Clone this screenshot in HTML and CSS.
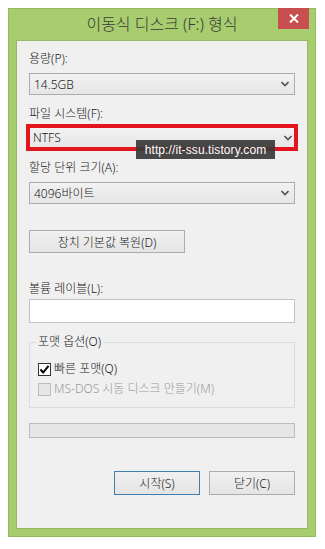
FILE: index.html
```html
<!DOCTYPE html>
<html lang="ko">
<head>
    <meta charset="UTF-8">
    <meta name="viewport" content="width=device-width, initial-scale=1.0">
    <title>이동식 디스크 (F:) 형식</title>
    <link rel="stylesheet" href="styles.css">
</head>
<body>
    <div class="window">
        <div class="titlebar">이동식 디스크 (F:) 형식</div>
        <div class="close-btn">
            <svg width="10" height="9" viewBox="0 0 10 9"><path d="M1 0.5 L9 8.5 M9 0.5 L1 8.5" stroke="#fff" stroke-width="2"/></svg>
        </div>

        <div class="client">
            <div class="label label-first">용량(P):</div>
            <div class="combo">
                <span>14.5GB</span>
                <svg class="chevron" width="8" height="6" viewBox="0 0 8 6"><path d="M0.5 1 L4 4.5 L7.5 1" fill="none" stroke="#555" stroke-width="1.6"/></svg>
            </div>

            <div class="label label-fs">파일 시스템(F):</div>
            <div class="highlight">
                <div class="combo combo-inner">
                    <span>NTFS</span>
                    <svg class="chevron" width="8" height="6" viewBox="0 0 8 6"><path d="M0.5 1 L4 4.5 L7.5 1" fill="none" stroke="#555" stroke-width="1.6"/></svg>
                </div>
                <div class="watermark">http://it-ssu.tistory.com</div>
            </div>

            <div class="label label-unit">할당 단위 크기(A):</div>
            <div class="combo">
                <span>4096바이트</span>
                <svg class="chevron" width="8" height="6" viewBox="0 0 8 6"><path d="M0.5 1 L4 4.5 L7.5 1" fill="none" stroke="#555" stroke-width="1.6"/></svg>
            </div>

            <div class="btn btn-restore">장치 기본값 복원(D)</div>

            <div class="label label-volume">볼륨 레이블(L):</div>
            <div class="textbox"></div>

            <fieldset class="options">
                <legend>포맷 옵션(O)</legend>
                <div class="check-row">
                    <span class="checkbox checked">
                        <svg width="11" height="11" viewBox="0 0 11 11"><path d="M1.5 5.5 L4.2 8.5 L9.5 1.8" fill="none" stroke="#000" stroke-width="2"/></svg>
                    </span>
                    <span>빠른 포맷(Q)</span>
                </div>
                <div class="check-row disabled">
                    <span class="checkbox"></span>
                    <span>MS-DOS 시동 디스크 만들기(M)</span>
                </div>
            </fieldset>

            <div class="progress"></div>

            <div class="actions">
                <div class="btn btn-default">시작(S)</div>
                <div class="btn">닫기(C)</div>
            </div>
        </div>
    </div>
</body>
</html>
```

FILE: styles.css
```css
body {
    margin: 0;
    padding: 0;
    background-color: #fff;
    font-family: "Noto Sans", "Noto Sans CJK KR", sans-serif;
    font-size: 12px;
    font-weight: 300;
    color: #1a1a1a;
}

/* Window frame */
.window {
    position: relative;
    width: 308px;
    height: 529px;
    margin: 8px;
    box-sizing: border-box;
    background-color: #a8cd6e;
    border: 1px solid #95bb5d;
    display: flex;
    flex-direction: column;
}

.titlebar {
    height: 31px;
    line-height: 30px;
    text-align: center;
    font-size: 16px;
    color: #3a3a3a;
}

.close-btn {
    position: absolute;
    top: -1px;
    right: 6px;
    width: 31px;
    height: 21px;
    background-color: #c74f4f;
    display: flex;
    justify-content: center;
    align-items: center;
}

.client {
    flex: 1;
    margin: 0 7px 7px;
    padding: 10px 12px 0;
    background-color: #f0f0f0;
    border: 1px solid #98b866;
    display: flex;
    flex-direction: column;
}

.label {
    line-height: 16px;
    height: 16px;
}
.label-fs { margin-top: 11px; }
.label-unit { margin-top: 9px; }
.label-volume { margin-top: 28px; }

/* Combo boxes */
.combo {
    height: 22px;
    box-sizing: border-box;
    margin-top: 6px;
    padding: 0 5px 0 4px;
    border: 1px solid #acacac;
    background: linear-gradient(#f2f2f2, #e6e6e6);
    display: flex;
    justify-content: space-between;
    align-items: center;
}

.highlight {
    position: relative;
    margin: 2px -3px 0;
    height: 27px;
    box-sizing: border-box;
    border: 4px solid #e3141d;
}

.combo-inner {
    height: 19px;
    margin-top: 0;
    border: none;
    padding: 0 2px 0 3px;
}

.watermark {
    position: absolute;
    left: 106px;
    top: 12px;
    width: 139px;
    height: 19px;
    line-height: 20px;
    text-align: center;
    background-color: rgba(58, 58, 58, 0.92);
    color: #fff;
    font-family: "Liberation Sans", sans-serif;
    font-size: 12px;
    font-weight: 400;
    letter-spacing: 0.1px;
}

/* Buttons */
.btn {
    width: 86px;
    height: 24px;
    box-sizing: border-box;
    border: 1px solid #acacac;
    background: linear-gradient(#f0f0f0, #e5e5e5);
    display: flex;
    justify-content: center;
    align-items: center;
}

.btn-restore {
    width: 156px;
    height: 23px;
    margin-top: 26px;
}

.btn-default {
    border-color: #3c7fb1;
}

.textbox {
    height: 24px;
    margin-top: 2px;
    box-sizing: border-box;
    background-color: #fff;
    border: 1px solid #c3c3c3;
}

/* Format options group */
.options {
    margin: 11px 0 0;
    padding: 11px 8px 10px;
    border: 1px solid #dcdcdc;
    min-width: 0;
}

.options legend {
    padding: 0 2px;
    margin-left: -2px;
    line-height: 16px;
}

.check-row {
    display: flex;
    align-items: center;
    gap: 3px;
    height: 16px;
    line-height: 16px;
}
.check-row + .check-row {
    margin-top: 4px;
}
.check-row.disabled {
    color: #9a9a9a;
}

.checkbox {
    width: 13px;
    height: 13px;
    box-sizing: border-box;
    border: 1px solid #bcbcbc;
    background-color: #e6e6e6;
    display: flex;
    justify-content: center;
    align-items: center;
}
.checkbox.checked {
    border-color: #333;
    background-color: #fff;
}

.progress {
    height: 15px;
    margin-top: 15px;
    box-sizing: border-box;
    border: 1px solid #bcbcbc;
    background-color: #e6e6e6;
}

.actions {
    display: flex;
    justify-content: flex-end;
    gap: 9px;
    margin-top: 33px;
}
```
